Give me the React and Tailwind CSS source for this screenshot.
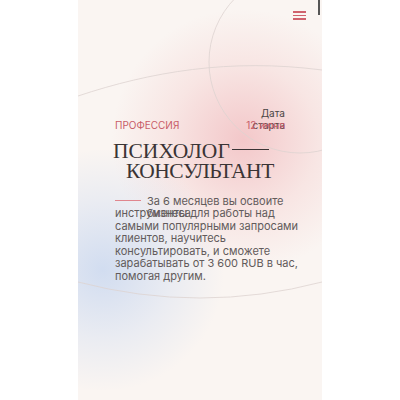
import React from "react";

const red = "text-[#c85c68]";

const Burger = () => (
	<button type="button" className="flex flex-col gap-[2px] w-[13px]">
		<span className="block h-[1.5px] w-full bg-[#d0626d]" />
		<span className="block h-[1.5px] w-full bg-[#d0626d]" />
		<span className="block h-[1.5px] w-full bg-[#d0626d]" />
	</button>
);

const Lines = () => (
	<svg className="absolute inset-0" width="244" height="400" viewBox="0 0 244 400" fill="none">
		<circle cx="222" cy="62" r="91" stroke="#ddd3d0" strokeWidth="0.8" />
		<path d="M0 96 C72 72 152 58 244 70" stroke="#ddd3d0" strokeWidth="0.8" />
		<path d="M0 282 Q122 314 244 282" stroke="#ddd3d0" strokeWidth="0.8" />
	</svg>
);

const bodyLines = [
	"инструменты для работы над",
	"самыми популярными запросами",
	"клиентов, научитесь",
	"консультировать, и сможете",
	"зарабатывать от 3 600 RUB в час,",
	"помогая другим.",
];

export default function App() {
	return (
		<div className="w-[400px] h-[400px] bg-white flex justify-center">
			<div className="relative w-[244px] h-[400px] overflow-hidden bg-[#faf5f2]">
				{/* gradient blobs */}
				<div className="absolute left-[30px] top-[10px] w-[270px] h-[260px] rounded-full bg-[radial-gradient(circle,rgba(240,180,184,0.7)_0%,rgba(244,200,200,0.35)_40%,rgba(250,245,242,0)_70%)]" />
				<div className="absolute left-[-100px] top-[150px] w-[250px] h-[240px] rounded-full bg-[radial-gradient(circle,rgba(205,218,240,0.9)_0%,rgba(215,225,242,0.45)_40%,rgba(250,245,242,0)_70%)]" />
				<Lines />
				<div className="absolute right-[2px] top-0 w-[2px] h-[15px] bg-[#555]" />

				<div className="relative flex flex-col font-['Inter','Liberation_Sans',sans-serif]">
					<div className="flex justify-end pt-[11px] pr-[16px]">
						<Burger />
					</div>

					<div className="px-[37px] mt-[87px]">
						<div className="flex justify-between items-end">
							<span className={`text-[10px] leading-[12px] ${red}`}>ПРОФЕССИЯ</span>
							<div className="relative w-[40px] text-right text-[10px] leading-[12px] text-[#4a4545]">
								<div>Дата</div>
								<div>старта</div>
								<span className={`absolute right-0 bottom-0 whitespace-nowrap ${red}`}>12 июня</span>
							</div>
						</div>

						<h1 className="mt-[10px] font-['Liberation_Serif',serif] text-[21.5px] leading-[20px] text-[#3a3435] ml-[-2px]">
							<div className="flex items-center">
								ПСИХОЛОГ
								<span className="block w-[37px] h-px bg-[#3a3435] ml-[2px] mt-[-3px]" />
							</div>
							<div className="pl-[13px] tracking-[-0.5px]">КОНСУЛЬТАНТ</div>
						</h1>

						<div className="relative mt-[14px] whitespace-nowrap text-[11px] leading-[12.5px] text-[#625b5b]">
							<div className="flex items-center">
								<span className="block w-[26px] h-px bg-[#e0868e] mr-[6px]" />
								За 6 месяцев вы освоите
							</div>
							{bodyLines.map((line) => (
								<div key={line}>{line}</div>
							))}
							<span className="absolute left-[32px] top-[12.5px]">бизнеса</span>
						</div>
					</div>
				</div>
			</div>
		</div>
	);
}
